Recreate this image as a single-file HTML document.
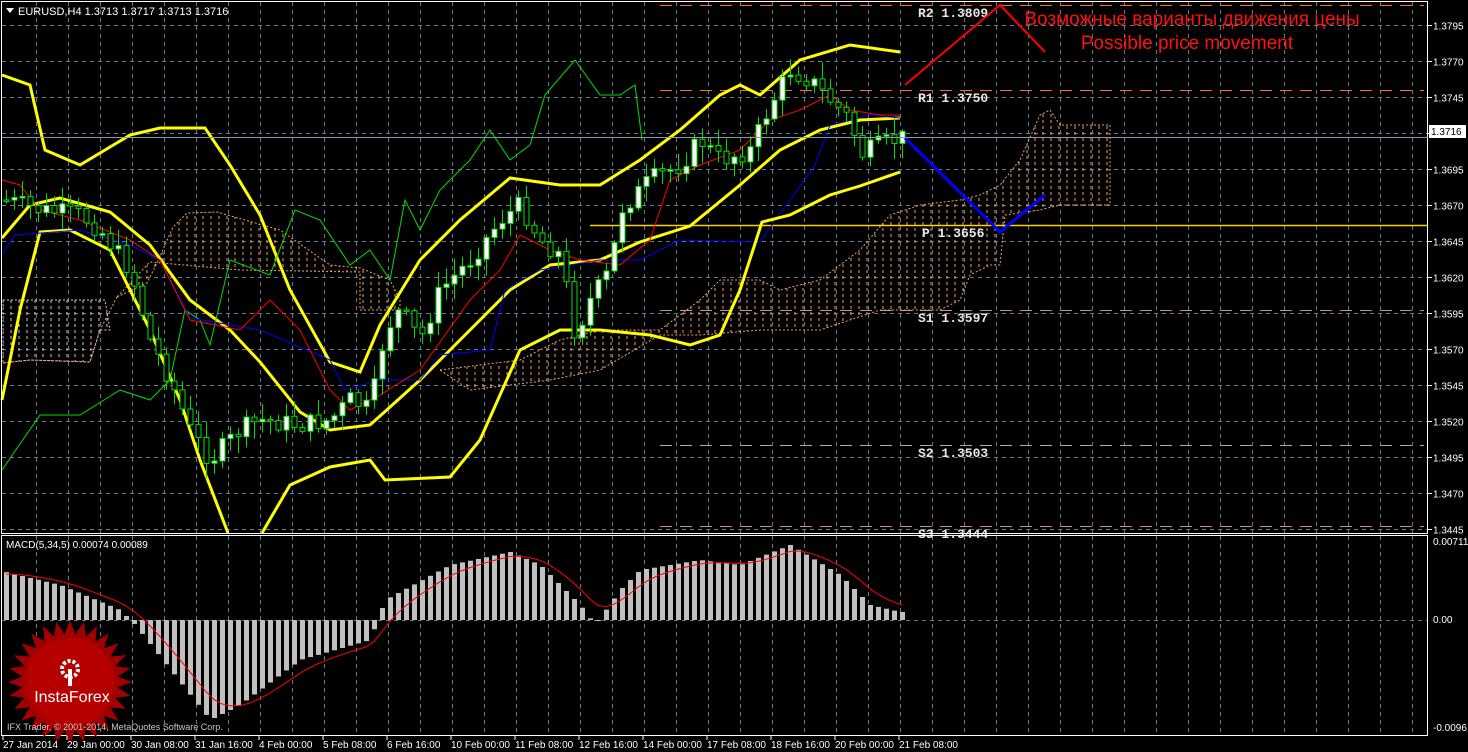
<!DOCTYPE html>
<html><head><meta charset="utf-8">
<style>
html,body{margin:0;padding:0;background:#000;width:1468px;height:752px;overflow:hidden}
svg{display:block}
text{font-family:"Liberation Sans","DejaVu Sans",sans-serif}
.m{font-family:"Liberation Mono","DejaVu Sans Mono",monospace}
</style></head>
<body>
<svg id="s" width="1468" height="752" xmlns="http://www.w3.org/2000/svg">
<defs>
<pattern id="h1" width="8" height="6" patternUnits="userSpaceOnUse"><line x1="3" y1="0" x2="3" y2="3" stroke="#f0a060" stroke-width="1"/></pattern>
<pattern id="h2" width="8" height="6" patternUnits="userSpaceOnUse"><line x1="3" y1="0" x2="3" y2="3" stroke="#e0c0d0" stroke-width="1"/></pattern>
</defs>
<rect width="1468" height="752" fill="#000"/>
<g id="grid"></g>
<!-- clouds -->
<polygon fill="url(#h2)" stroke="#e0c0d0" stroke-dasharray="2,2" points="3,300 105,300 110,330 100,330 90,362 30,360 3,363"/>
<polyline fill="none" stroke="#f0a060" stroke-dasharray="2,2" points="3,363 30,360 90,362 100,330 117,297"/>
<polygon fill="url(#h1)" stroke="#f0a060" stroke-dasharray="2,2" points="117,297 147,283 157,263 173,227 187,213 217,212 280,230 330,265 360,268 390,280 400,300 400,310 360,310 360,272 240,270 150,262"/>
<polygon fill="url(#h1)" stroke="#f0a060" stroke-dasharray="2,2" points="440,370 520,360 560,340 600,330 660,330 700,300 720,280 760,280 780,290 820,280 860,250 890,215 920,205 960,200 980,195 1000,185 1020,160 1040,115 1050,110 1060,125 1110,125 1110,205 1060,205 1040,210 1005,215 1000,265 990,265 970,275 960,300 940,310 880,310 820,330 760,330 700,335 660,335 600,370 550,380 470,390"/>
<g id="piv"></g>
<polyline id="bu" fill="none" stroke="#ffff00" stroke-width="3"/>
<polyline id="bm" fill="none" stroke="#ffff00" stroke-width="3"/>
<polyline id="bl" fill="none" stroke="#ffff00" stroke-width="3"/>
<polyline id="gr" fill="none" stroke="#00e000" stroke-width="1"/>
<polyline id="bk" fill="none" stroke="#0000ff" stroke-width="1"/>
<polyline id="rd" fill="none" stroke="#ff0000" stroke-width="1"/>
<g id="candles"></g>
<polyline points="905,85 1000,5 1045,52" fill="none" stroke="#ff0000" stroke-width="2"/>
<polyline points="905,138 1000,232 1045,195" fill="none" stroke="#0000ff" stroke-width="3"/>
<text x="1192" y="25" fill="#ff1010" font-size="19" text-anchor="middle">Возможные варианты движения цены</text>
<text x="1187" y="49" fill="#ff1010" font-size="19" text-anchor="middle">Possible price movement</text>
<rect x="1.5" y="1.5" width="1426" height="532" fill="none" stroke="#fff" stroke-width="1"/>
<rect x="1.5" y="535.5" width="1426" height="200" fill="none" stroke="#fff" stroke-width="1"/>
<polygon points="6,8 14,8 10,13" fill="#fff"/>
<text x="18" y="15" fill="#fff" font-size="11">EURUSD,H4  1.3713 1.3717 1.3713 1.3716</text>
<text x="6" y="548" fill="#fff" font-size="10">MACD(5,34,5) 0.00074 0.00089</text>
<g id="macd"></g>
<polyline id="sig" fill="none" stroke="#ff0000" stroke-width="1"/>
<g transform="translate(70,682)">
<polygon id="star" fill="#a00000"/>
<circle r="44" fill="#c40000" opacity="0.6"/>
<circle cx="0" cy="-13" r="8" fill="none" stroke="#fff" stroke-width="4" stroke-dasharray="3,2"/>
<rect x="-2" y="-13" width="4" height="17" fill="#fff"/>
<text x="2" y="20" fill="#fff" font-size="16" text-anchor="middle">InstaForex</text>
</g>
<text x="7" y="730" fill="#c8c8c8" font-size="9">IFX Trader, © 2001-2014, MetaQuotes Software Corp.</text>
<g id="axis"></g>
<rect x="1429" y="125" width="37" height="13" fill="#fff"/>
<text x="1431" y="135" fill="#000" font-size="10">1.3716</text>
<line x1="2" y1="137.5" x2="1428" y2="137.5" stroke="#8a9aae"/>
</svg>
<script>
var NS="http://www.w3.org/2000/svg";
function el(p,t,a,tx){var e=document.createElementNS(NS,t);for(var k in a)e.setAttribute(k,a[k]);if(tx)e.textContent=tx;document.getElementById(p).appendChild(e);return e;}
for(var x=36;x<1428;x+=32){el("grid","line",{x1:x+.5,y1:2,x2:x+.5,y2:533,stroke:"#6a7a8e","stroke-dasharray":"4,4"});el("grid","line",{x1:x+.5,y1:536,x2:x+.5,y2:735,stroke:"#6a7a8e","stroke-dasharray":"4,4"});}
for(var i=0;i<15;i++){var y=Math.round(25+i*36)+.5;if(y>533)break;el("grid","line",{x1:2,y1:y,x2:1428,y2:y,stroke:"#6a7a8e","stroke-dasharray":"4,4"});
 el("axis","line",{x1:1428,y1:y,x2:1432,y2:y,stroke:"#fff"});
 var p=(1.3795-i*0.0025).toFixed(4);if(i!=3)el("axis","text",{x:1433,y:y+4,fill:"#fff","font-size":"10"},p);}
el("grid","line",{x1:2,y1:620.5,x2:1428,y2:620.5,stroke:"#6a7a8e","stroke-dasharray":"4,4"});
el("axis","text",{x:1433,y:545,fill:"#fff","font-size":"10"},"0.00711");
el("axis","text",{x:1433,y:623,fill:"#fff","font-size":"10"},"0.00");
el("axis","text",{x:1433,y:731,fill:"#fff","font-size":"10"},"-0.0096");
var tl=["27 Jan 2014","29 Jan 00:00","30 Jan 08:00","31 Jan 16:00","4 Feb 00:00","5 Feb 08:00","6 Feb 16:00","10 Feb 00:00","11 Feb 08:00","12 Feb 16:00","14 Feb 00:00","17 Feb 08:00","18 Feb 16:00","20 Feb 00:00","21 Feb 08:00"];
for(var i=0;i<tl.length;i++){var x=3+i*64;el("axis","line",{x1:x,y1:736,x2:x,y2:740,stroke:"#fff"});el("axis","text",{x:x,y:748,fill:"#fff","font-size":"10"},tl[i]);}
var pv=[["R2 1.3809",5,"#ff6a20"],["R1 1.3750",90,"#ff6a20"],["S1 1.3597",310,"#d09090"],["S2 1.3503",445,"#c0a0a0"],["S3 1.3444",526,"#d09090"]];
pv.forEach(function(q){el("piv","line",{x1:660,y1:q[1]+.5,x2:1424,y2:q[1]+.5,stroke:q[2],"stroke-dasharray":"12,8"});el("piv","text",{x:918,y:q[1]+12,fill:"#e8e8e8","font-size":"13","class":"m","font-weight":"bold"},q[0]);});
el("piv","line",{x1:590,y1:225.5,x2:1428,y2:225.5,stroke:"#ffd000","stroke-width":1.5});
el("piv","text",{x:922,y:237,fill:"#e8e8e8","font-size":"13","class":"m","font-weight":"bold"},"P 1.3656");
function pts(a){return a.map(function(p){return p.join(",")}).join(" ");}
document.getElementById("bu").setAttribute("points",pts([[2,75],[30,85],[45,150],[80,165],[130,135],[160,128],[205,128],[230,165],[260,215],[290,290],[330,362],[360,372],[380,325],[420,260],[460,220],[510,178],[560,185],[600,185],[640,160],[680,130],[720,95],[740,85],[760,95],[800,60],[850,45],[900,52]]));
document.getElementById("bm").setAttribute("points",pts([[2,238],[30,205],[60,198],[110,212],[150,245],[190,300],[230,330],[260,362],[300,412],[330,430],[370,425],[420,380],[470,330],[510,290],[550,265],[600,260],[640,242],[690,226],[740,185],[780,150],[820,130],[860,120],[900,118]]));
document.getElementById("bl").setAttribute("points",pts([[2,400],[20,310],[40,232],[70,230],[110,250],[150,330],[180,400],[200,460],[228,533]]));
el("candles","polyline",{points:pts([[262,533],[290,485],[330,467],[370,460],[385,480],[450,477],[480,440],[520,350],[560,330],[600,330],[650,335],[690,345],[720,335],[740,290],[762,222],[790,215],[830,195],[860,186],[900,172]]),fill:"none",stroke:"#ffff00","stroke-width":3});
document.getElementById("gr").setAttribute("points",pts([[2,470],[40,415],[80,415],[120,390],[150,400],[170,380],[185,310],[200,320],[210,345],[230,260],[270,275],[295,210],[320,220],[350,265],[370,250],[390,280],[405,200],[420,230],[440,190],[470,160],[490,130],[510,160],[530,145],[545,95],[575,60],[600,95],[620,95],[635,85],[642,140]]));
document.getElementById("bk").setAttribute("points",pts([[2,255],[15,235],[80,230],[130,245],[160,260],[190,318],[260,330],[330,360],[345,390],[380,380],[420,380],[440,355],[490,350],[505,290],[540,270],[600,260],[640,260],[680,240],[760,242],[790,200],[815,165],[830,125],[870,115],[900,118]]));
document.getElementById("rd").setAttribute("points",pts([[2,180],[20,185],[40,210],[80,220],[130,240],[160,260],[190,320],[240,330],[270,300],[300,330],[330,390],[350,410],[380,395],[420,370],[470,300],[500,270],[520,235],[550,250],[580,260],[620,265],[650,240],[670,180],[700,165],[740,150],[770,120],[800,110],[830,95],[850,110],[880,115],[900,115]]));
var path=[[5,200],[40,210],[80,215],[100,230],[130,270],[150,340],[170,380],[190,430],[210,460],[240,430],[260,420],[300,425],[330,420],[350,400],[370,410],[385,330],[400,310],[420,340],[440,290],[470,260],[500,220],[520,205],[540,240],[560,255],[575,335],[590,300],[610,270],[620,210],[650,180],[680,165],[700,140],[720,160],[750,150],[770,105],[790,70],[810,80],[830,100],[850,120],[860,155],[880,145],[900,138]];
function iy(x){for(var i=0;i<path.length-1;i++){if(x>=path[i][0]&&x<=path[i+1][0]){var t=(x-path[i][0])/(path[i+1][0]-path[i][0]);return path[i][1]+t*(path[i+1][1]-path[i][1]);}}return 138;}
var seed=7;function rnd(){seed=(seed*9301+49297)%233280;return seed/233280;}
var prevC=iy(5);
for(var x=6;x<=902;x+=8){var c=iy(x)+(rnd()-.5)*20;var o=prevC;prevC=c;var hi=Math.min(o,c)-rnd()*15-2,lo=Math.max(o,c)+rnd()*15+2;
 el("candles","line",{x1:x+.5,y1:hi.toFixed(1),x2:x+.5,y2:lo.toFixed(1),stroke:"#00e000"});
 var bt=Math.min(o,c),bh=Math.max(Math.abs(o-c),1.5);
 el("candles","rect",{x:x-2,y:bt.toFixed(1),width:5,height:bh.toFixed(1),fill:(c<o?"#fff":"#000"),stroke:"#00e000","stroke-width":1});}
var mp=[[5,572],[60,585],[120,610],[135,625],[210,720],[240,705],[300,660],[370,640],[385,600],[450,565],[510,552],[540,565],[580,605],[595,625],[620,590],[640,570],[700,560],[740,565],[790,545],[840,575],[870,605],[900,612]];
function my(x){for(var i=0;i<mp.length-1;i++){if(x>=mp[i][0]&&x<=mp[i+1][0]){var t=(x-mp[i][0])/(mp[i+1][0]-mp[i][0]);return mp[i][1]+t*(mp[i+1][1]-mp[i][1]);}}return 612;}
var sp=[],s=575;
for(var x=6;x<=902;x+=8){var v=my(x);var y1=Math.min(v,620),h=Math.abs(v-620);el("macd","rect",{x:x-2,y:y1.toFixed(1),width:5,height:Math.max(h,1).toFixed(1),fill:"#c0c0c0"});s=s+(v-s)*0.3;sp.push([x,s.toFixed(1)]);}
document.getElementById("sig").setAttribute("points",pts(sp));
var st=[];for(var i=0;i<56;i++){var r=i%2?48:62;var a=i*Math.PI/28;st.push([(r*Math.sin(a)).toFixed(1),(-r*Math.cos(a)).toFixed(1)]);}
document.getElementById("star").setAttribute("points",pts(st));
</script>
</body></html>
